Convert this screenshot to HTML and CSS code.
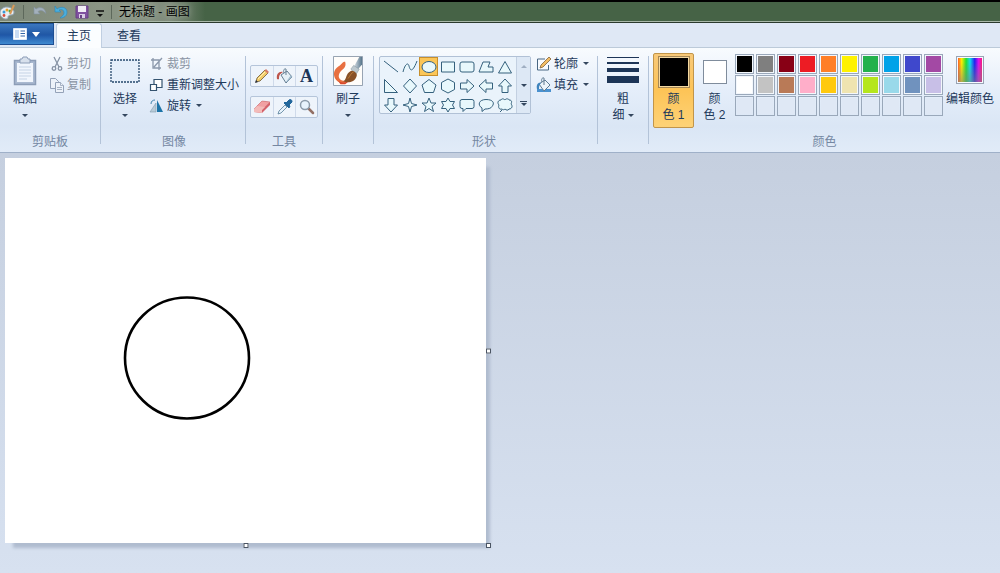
FILE: index.html
```html
<!DOCTYPE html>
<html lang="zh-CN">
<head>
    <meta charset="UTF-8">
    <meta name="viewport" content="width=device-width, initial-scale=1.0">
    <title>无标题 - 画图</title>
    <link rel="stylesheet" href="styles.css">
</head>
<body>
    <header class="title-bar">
        <svg class="app-icon" width="16" height="16" viewBox="0 0 16 16"><path d="M7 3C3 3 0 5.500 0 9s3 6 6 6c2 0 2-1 2-2s1-2 3-2 3-1 3-3-3-5-7-5z" fill="#e8eef2" stroke="#8fa3b4"/><circle cx="4" cy="8" r="1.500" fill="#3b9bd8"/><circle cx="7" cy="6" r="1.500" fill="#e8a030"/><circle cx="10" cy="7" r="1.500" fill="#4caa4c"/><circle cx="4" cy="11.500" r="1.400" fill="#d84a3a"/><path d="M14 1l-4 9" stroke="#d79a58" stroke-width="2"/></svg>
        <span class="title-sep"></span>
        <div class="quick-access">
            <button class="quick-btn" aria-label="撤消"><svg width="14" height="14" viewBox="0 0 14 14"><path d="M1 2v7h6L5 6.500c3-2 5-1 8 2C12 3 8 1 3 4z" fill="#a3b0bb" stroke="#8291a0" stroke-width=".6"/></svg></button>
            <button class="quick-btn" aria-label="恢复"><svg width="14" height="14" viewBox="0 0 14 14"><path d="M1 1v6h6L5 5c3-1 5 0 5 3 0 2-2 3-4 5 4 0 7-2 7-6 0-5-6-6-10-3z" fill="#4baedc" stroke="#2e86b8" stroke-width=".6"/></svg></button>
            <button class="quick-btn" aria-label="保存"><svg width="14" height="14" viewBox="0 0 14 14"><path d="M1 1h12v12H1z" fill="#8051a0" stroke="#684087"/><path d="M3 1h8v6H3z" fill="#f1edf6"/><path d="M4 9h6v4H4z" fill="#d9cde5"/><path d="M5 10h2v3H5z" fill="#684087"/></svg></button>
            <button class="quick-btn quick-more" aria-label="自定义"><svg width="8" height="8" viewBox="0 0 8 8"><path d="M0 1h8" stroke="#111" stroke-width="1.500"/><path d="M1 4h6L4 7z" fill="#111"/></svg></button>
        </div>
        <span class="title-sep"></span>
        <h1 class="title">无标题 - 画图</h1>
    </header>

    <nav class="tabs">
        <button class="file-btn" aria-label="文件">
            <svg width="14" height="12" viewBox="0 0 14 12"><path d="M.5.5h13v11H.5z" fill="#fff" stroke="#dce8f8"/><path d="M2 2h4v8H2z" fill="#c9dcf4"/><path d="M7.500 3H12M7.500 5.500H12M7.500 8H12" stroke="#3265a8"/></svg>
            <svg width="8" height="5" viewBox="0 0 8 5"><path d="M0 0h8L4 5z" fill="#fff"/></svg>
        </button>
        <button class="tab active">主页</button>
        <button class="tab">查看</button>
    </nav>

    <main>
        <section class="ribbon">
            <!-- Clipboard -->
            <div class="group">
                <div class="group-body">
                    <button class="big-btn">
                        <svg width="24" height="30" viewBox="0 0 24 30"><path d="M1.500 4.500h21v24h-21z" fill="#a9b9d0" stroke="#8c9db7" stroke-width="1.500"/><path d="M4 7h16v19H4z" fill="#f1f6fd"/><path d="M6 11h12M6 14h12M6 17h12M6 20h12M6 23h8" stroke="#c5d3e5"/><path d="M7 3h2l1-2h4l1 2h2v4H7z" fill="#d7e0ec" stroke="#8c9db7"/></svg>
                        <span>粘贴</span>
                        <i class="arrow"></i>
                    </button>
                    <div class="stack">
                        <button class="small-btn" disabled><svg width="16" height="16" viewBox="0 0 16 16" fill="none" stroke="#8793a5" stroke-width="1.300"><path d="M5 1l5 10M11 1L6 11"/><circle cx="5" cy="12.500" r="1.800"/><circle cx="11" cy="12.500" r="1.800"/></svg><span>剪切</span></button>
                        <button class="small-btn" disabled><svg width="16" height="16" viewBox="0 0 16 16" fill="#edf2f9" stroke="#94a2b8"><path d="M1.500 1.500h5l3 3v7h-8z"/><path d="M6.500 5.500h5l3 3v7h-8z"/><path d="M11.500 5.500v3h3M8 10.500h5M8 12.500h5" stroke-width=".8"/></svg><span>复制</span></button>
                    </div>
                </div>
                <div class="group-label">剪贴板</div>
            </div>

            <!-- Image -->
            <div class="group image">
                <div class="group-body">
                    <button class="big-btn">
                        <svg width="30" height="30" viewBox="0 0 30 30"><path d="M1 4h28v22H1z" fill="#e4eefa" stroke="#25486c" stroke-width="1.300" stroke-dasharray="2 1"/></svg>
                        <span>选择</span>
                        <i class="arrow"></i>
                    </button>
                    <div class="stack">
                        <button class="small-btn" disabled><svg width="16" height="16" viewBox="0 0 16 16" fill="none" stroke="#8b98ab" stroke-width="1.300"><path d="M4 2v10h8M2 4h8v10M5 11l8-9"/></svg><span>裁剪</span></button>
                        <button class="small-btn"><svg width="16" height="16" viewBox="0 0 16 16" fill="#fff" stroke="#34536f" stroke-width="1.200"><path d="M5 2.500h8v8H5z"/><path d="M1.500 7.500h6v6h-6z"/></svg><span>重新调整大小</span></button>
                        <button class="small-btn"><svg width="16" height="16" viewBox="0 0 16 16"><path d="M7 5v9H1z" fill="#b8cbd8" stroke="#829aab" stroke-width=".6"/><path d="M8 2l6 12H8z" fill="#1c74a8"/><path d="M2 6c0-3 2-4 4-4" fill="none" stroke="#3e82ad"/></svg><span>旋转</span><i class="arrow"></i></button>
                    </div>
                </div>
                <div class="group-label">图像</div>
            </div>

            <!-- Tools -->
            <div class="group tools">
                <div class="group-body">
                    <div class="tool-rows">
                        <div class="tool-row">
                            <button class="tool" aria-label="铅笔"><svg width="16" height="16" viewBox="0 0 16 16"><path d="M2 14l1-4 8-8 3 3-8 8z" fill="#f3cd69" stroke="#6b5632" stroke-width=".8"/><path d="M1 15l1-3 2 2z" fill="#29303b"/><path d="M10.500 2.500L12 1l3 3-1.500 1.500z" fill="#d67a68"/><path d="M4 11l7-7" stroke="#fff0b5"/></svg></button>
                            <button class="tool" aria-label="用颜色填充"><svg width="18" height="16" viewBox="0 0 18 16"><path d="M5 7l6-4 5 6-6 6z" fill="#e6f0f7" stroke="#657e92"/><path d="M10 7V1c-2-1-3 2-2 4" fill="none" stroke="#657e92"/><path d="M1 11c-1-5 2-8 6-7-3 2-4 3-4 7-1 1-2 0-2 0z" fill="#bd554b"/><path d="M11 14l5-5-1-2-5 7z" fill="#9fbacd"/></svg></button>
                            <button class="tool text-tool" aria-label="文本">A</button>
                        </div>
                        <div class="tool-row">
                            <button class="tool" aria-label="橡皮擦"><svg width="16" height="16" viewBox="0 0 16 16"><path d="M0 10l8-8 8 1v3l-8 8-8-1z" fill="#d4616a"/><path d="M0 10l8-8 8 1-8 8z" fill="#f1a0a2" stroke="#cd7579" stroke-width=".6"/><path d="M0 10l3-3 8 1-3 3v3l-8-1z" fill="#f3bbb9"/></svg></button>
                            <button class="tool" aria-label="颜色选取器"><svg width="16" height="16" viewBox="0 0 16 16"><path d="M1 15l1-3 6-6 2 2-6 6z" fill="#e7f2fb" stroke="#557d99" stroke-width=".8"/><path d="M7 4l5 5 1-2-1-1 3-3c0-2-1-3-3-2L9 4 8 3z" fill="#21669b" stroke="#21669b"/></svg></button>
                            <button class="tool" aria-label="放大镜"><svg width="16" height="16" viewBox="0 0 16 16"><path d="M9.500 9.500L14 14" stroke="#937065" stroke-width="2.500" stroke-linecap="round"/><circle cx="6" cy="6" r="4.500" fill="#e7f3fc" stroke="#8b9ba9" stroke-width="1.500"/></svg></button>
                        </div>
                    </div>
                </div>
                <div class="group-label">工具</div>
            </div>

            <!-- Brushes -->
            <div class="group">
                <div class="group-body">
                    <button class="big-btn">
                        <svg width="30" height="30" viewBox="0 0 32 32"><defs><linearGradient id="handle" x1="0" x2="1"><stop stop-color="#dce2e7"/><stop offset="1" stop-color="#56758b"/></linearGradient></defs><path d="M.5.5h31v31H.5z" fill="#fffdfa" stroke="#8e9bab"/><path d="M13 6c-3 0-3 2-7 5-6 4-6 10-3 14 3 4 9 5 15 1-9 2-14-2-11-8 2-4 8-5 6-12z" fill="#e86f3f"/><path d="M2 22c3 6 8 8 16 4l-5 4H8z" fill="#d8492b"/><path d="M22 12l6-11h3v8l-6 7z" fill="url(#handle)"/><path d="M19 14l3-4 6 4-3 5z" fill="#bdc8ce" stroke="#788b96" stroke-width=".5"/><path d="M11 27c4-2 2-8 8-11 3-1 8 3 6 6-2 6-9 7-14 5z" fill="#895127"/><path d="M16 24c2-2 3-6 6-7" stroke="#bc7b38" fill="none"/></svg>
                        <span>刷子</span>
                        <i class="arrow"></i>
                    </button>
                </div>
                <div class="group-label"></div>
            </div>

            <!-- Shapes -->
            <div class="group shapes">
                <div class="group-body">
                    <div class="shape-box">
                        <div class="shape-grid">
                            <button class="shape" aria-label="直线"><svg viewBox="0 0 16 16"><path d="M1 2l14 11"/></svg></button>
                            <button class="shape" aria-label="曲线"><svg viewBox="0 0 16 16"><path d="M1 13C3 5 6 3 7 7s3 8 8-5"/></svg></button>
                            <button class="shape selected" aria-label="椭圆形"><svg viewBox="0 0 16 16"><ellipse cx="8" cy="8" rx="7" ry="5.500"/></svg></button>
                            <button class="shape" aria-label="矩形"><svg viewBox="0 0 16 16"><path d="M1.500 3h13v10h-13z"/></svg></button>
                            <button class="shape" aria-label="圆角矩形"><svg viewBox="0 0 16 16"><rect x="1" y="3" width="14" height="10" rx="2"/></svg></button>
                            <button class="shape" aria-label="多边形"><svg viewBox="0 0 16 16"><path d="M5 3h7l-2 5h5v5H1z"/></svg></button>
                            <button class="shape" aria-label="三角形"><svg viewBox="0 0 16 16"><path d="M8 2.500L14.500 14h-13z"/></svg></button>
                            <button class="shape" aria-label="直角三角形"><svg viewBox="0 0 16 16"><path d="M1.500 1.500v13h13z"/></svg></button>
                            <button class="shape" aria-label="菱形"><svg viewBox="0 0 16 16"><path d="M8 1l6.500 7L8 15 1.500 8z"/></svg></button>
                            <button class="shape" aria-label="五边形"><svg viewBox="0 0 16 16"><path d="M8 1.500l7 5.500-2.500 7.500h-9L1 7z"/></svg></button>
                            <button class="shape" aria-label="六边形"><svg viewBox="0 0 16 16"><path d="M8 1l6.500 3.500v7L8 15l-6.500-3.500v-7z"/></svg></button>
                            <button class="shape" aria-label="右箭头"><svg viewBox="0 0 16 16"><path d="M1.500 5H8V1.500L15 8l-7 6.500V11H1.500z"/></svg></button>
                            <button class="shape" aria-label="左箭头"><svg viewBox="0 0 16 16"><path d="M14.500 5H8V1.500L1 8l7 6.500V11h6.500z"/></svg></button>
                            <button class="shape" aria-label="上箭头"><svg viewBox="0 0 16 16"><path d="M5 14.500V8H1.500L8 1l6.500 7H11v6.500z"/></svg></button>
                            <button class="shape" aria-label="下箭头"><svg viewBox="0 0 16 16"><path d="M5 1.500V8H1.500L8 15l6.500-7H11V1.500z"/></svg></button>
                            <button class="shape" aria-label="四角星"><svg viewBox="0 0 16 16"><path d="M8 1l1.500 5.500L15 8 9.500 9.500 8 15 6.500 9.500 1 8l5.500-1.500z"/></svg></button>
                            <button class="shape" aria-label="五角星"><svg viewBox="0 0 16 16"><path d="M8 1l2 5h5l-4 3.500 1.500 5L8 11.500l-4.500 3L5 9.500 1 6h5z"/></svg></button>
                            <button class="shape" aria-label="六角星"><svg viewBox="0 0 16 16"><path d="M8 1l2 3.500h4.500L12.500 8l2 3.500H10L8 15l-2-3.500H1.500L3.500 8l-2-3.500H6z"/></svg></button>
                            <button class="shape" aria-label="圆角矩形标注"><svg viewBox="0 0 16 16"><path d="M3 2.500h10q2 0 2 2v5q0 2-2 2H7l-3 3v-3H3q-2 0-2-2v-5q0-2 2-2z"/></svg></button>
                            <button class="shape" aria-label="椭圆形标注"><svg viewBox="0 0 16 16"><path d="M4 11C-1 8 1 2.500 8 2.500S17 6 14 9.500c-1 2-4 2.500-7 2.500l-3 2.500z"/></svg></button>
                            <button class="shape" aria-label="云形标注"><svg viewBox="0 0 16 16"><path d="M4 3c1-2 3-1 4 0 1-2 4-1 4 0 3 0 3 2 2 4 2 2 1 5-2 5-1 2-3 1-4 0-1 1-2 1-3 0-3 1-4-2-3-4C0 6 1 3 4 3zM5 13l-2 2"/></svg></button>
                        </div>
                        <div class="shape-scroll">
                            <button class="scroll-btn" aria-label="向上" disabled><i class="arrow up"></i></button>
                            <button class="scroll-btn" aria-label="向下"><i class="arrow"></i></button>
                            <button class="scroll-btn more" aria-label="更多"><i class="arrow"></i></button>
                        </div>
                    </div>
                    <div class="stack">
                        <button class="small-btn"><svg width="16" height="16" viewBox="0 0 16 16"><path d="M9 3H1.500v11h11V9" fill="#f8fbff" stroke="#496783"/><path d="M4 12l1-3 8-8 2 2-8 8z" fill="#f3bd65" stroke="#826238" stroke-width=".8"/></svg><span>轮廓</span><i class="arrow"></i></button>
                        <button class="small-btn"><svg width="16" height="16" viewBox="0 0 16 16"><path d="M1 12h14v3H1z" fill="#4a91cf"/><path d="M3 7l6-4 5 5-6 6z" fill="#edf4f9" stroke="#607b91"/><path d="M8 8V1C6 0 5 3 6 5" fill="none" stroke="#607b91"/><path d="M1 12c-1-4 1-7 4-6-2 2-2 4-2 6z" fill="#3e83bd"/></svg><span>填充</span><i class="arrow"></i></button>
                    </div>
                </div>
                <div class="group-label">形状</div>
            </div>

            <!-- Line width -->
            <div class="group">
                <div class="group-body">
                    <button class="big-btn">
                        <svg width="32" height="30" viewBox="0 0 32 30" fill="#1d3557"><path d="M0 1h32v1H0zM0 6h32v2H0zM0 12h32v4H0zM0 20h32v7H0z"/></svg>
                        <span>粗<br>细<i class="arrow"></i></span>
                    </button>
                </div>
                <div class="group-label"></div>
            </div>

            <!-- Colors -->
            <div class="group colors">
                <div class="group-body">
                    <button class="color-btn selected">
                        <b class="swatch large"></b>
                        <span>颜<br>色 1</span>
                    </button>
                    <button class="color-btn">
                        <b class="swatch"></b>
                        <span>颜<br>色 2</span>
                    </button>
                    <div class="palette">
                        <button class="cell black" aria-label="黑色"></button>
                        <button class="cell gray" aria-label="灰色"></button>
                        <button class="cell dark-red" aria-label="深红色"></button>
                        <button class="cell red" aria-label="红色"></button>
                        <button class="cell orange" aria-label="橙色"></button>
                        <button class="cell yellow" aria-label="黄色"></button>
                        <button class="cell green" aria-label="绿色"></button>
                        <button class="cell turquoise" aria-label="青绿"></button>
                        <button class="cell indigo" aria-label="靛蓝"></button>
                        <button class="cell purple" aria-label="紫色"></button>
                        <button class="cell white" aria-label="白色"></button>
                        <button class="cell light-gray" aria-label="浅灰色"></button>
                        <button class="cell brown" aria-label="褐色"></button>
                        <button class="cell rose" aria-label="玫瑰色"></button>
                        <button class="cell gold" aria-label="金色"></button>
                        <button class="cell cream" aria-label="浅黄色"></button>
                        <button class="cell lime" aria-label="酸橙色"></button>
                        <button class="cell sky" aria-label="淡青绿色"></button>
                        <button class="cell blue-gray" aria-label="蓝灰色"></button>
                        <button class="cell lavender" aria-label="淡紫色"></button>
                        <button class="cell" disabled></button>
                        <button class="cell" disabled></button>
                        <button class="cell" disabled></button>
                        <button class="cell" disabled></button>
                        <button class="cell" disabled></button>
                        <button class="cell" disabled></button>
                        <button class="cell" disabled></button>
                        <button class="cell" disabled></button>
                        <button class="cell" disabled></button>
                        <button class="cell" disabled></button>
                    </div>
                    <button class="big-btn edit-colors">
                        <b class="spectrum"></b>
                        <span>编辑颜色</span>
                    </button>
                </div>
                <div class="group-label">颜色</div>
            </div>
        </section>

        <section class="workspace">
            <div class="canvas">
                <svg class="drawing" viewBox="0 0 481 385"><ellipse cx="182" cy="200" rx="62" ry="60.500" fill="none" stroke="#000" stroke-width="2.600"/></svg>
                <i class="handle right"></i>
                <i class="handle bottom"></i>
                <i class="handle corner"></i>
            </div>
        </section>
    </main>
</body>
</html>
```

FILE: styles.css
```css
* {
    box-sizing: border-box;
}
body {
    margin: 0;
    min-height: 100vh;
    display: flex;
    flex-direction: column;
    font-family: "Liberation Sans", "Noto Sans CJK SC", sans-serif;
    font-size: 12px;
    line-height: 16px;
    color: #1e395b;
}
button {
    margin: 0;
    padding: 0;
    border: 0;
    background: none;
    font: inherit;
    color: inherit;
}
svg {
    display: block;
    flex: none;
}
main {
    flex: 1;
    display: flex;
    flex-direction: column;
}

/* title bar */
.title-bar {
    display: flex;
    align-items: center;
    height: 23px;
    border-top: 2px solid #000;
    border-bottom: 1px solid #2b3a2d;
    background: linear-gradient(90deg, #7d8878 0, #8b9585 100px, #7f8b7b 170px, #466346 205px, #466346 100%);
    box-shadow: inset 0 -1px #a9b8a9;
}
.title-sep {
    width: 1px;
    height: 14px;
    margin: 0 7px;
    background: #5d685b;
}
.quick-access {
    display: flex;
    align-items: center;
    gap: 7px;
    padding-left: 2px;
}
.quick-more {
    padding: 3px 0 0;
}
.title {
    margin: 0;
    font-size: 12px;
    font-weight: normal;
    color: #000;
    text-shadow: 0 0 6px #b9c2b5;
}

/* tabs */
.tabs {
    display: flex;
    height: 25px;
    background: #dfe8f5;
    border-bottom: 1px solid #bccad9;
}
.file-btn {
    display: flex;
    align-items: center;
    justify-content: center;
    gap: 5px;
    width: 54px;
    height: 22px;
    border: 1px solid #1d4e93;
    border-left: 0;
    background: linear-gradient(#3b77bf, #2259a6 50%, #1f57a8 55%, #3f8ad0);
}
.tab {
    width: 46px;
    height: 25px;
    margin: 0 2px;
    border: 1px solid transparent;
}
.tab.active {
    border-color: #c0cfe2;
    border-bottom: 0;
    border-radius: 3px 3px 0 0;
    background: #fbfdff;
}

/* ribbon */
.ribbon {
    display: flex;
    height: 105px;
    background: linear-gradient(#f8fbfe, #e5eefa 40%, #dae6f5 75%, #e1ebf8);
    border-bottom: 1px solid #9fb0c8;
}
.group {
    position: relative;
    display: flex;
    flex-direction: column;
    padding: 5px 10px 0 9px;
}
.group::after {
    content: "";
    position: absolute;
    top: 8px;
    right: 0;
    bottom: 8px;
    width: 1px;
    background: #b3c3d8;
}
.group-body {
    display: flex;
    gap: 8px;
    height: 81px;
}
.group-label {
    text-align: center;
    color: #7487a2;
}
.big-btn {
    display: flex;
    flex-direction: column;
    align-items: center;
    gap: 5px;
    min-width: 32px;
    padding-top: 3px;
    white-space: nowrap;
}
.stack {
    display: flex;
    flex-direction: column;
}
.small-btn {
    display: flex;
    align-items: center;
    gap: 2px;
    height: 21px;
    white-space: nowrap;
}
.small-btn:disabled {
    color: #8a94a3;
}
.arrow {
    display: inline-block;
    border: 3px solid transparent;
    border-top-color: #34475f;
    border-bottom: 0;
}
.big-btn > .arrow {
    margin-top: 2px;
}
.big-btn span .arrow,
.small-btn .arrow {
    margin-left: 3px;
    vertical-align: middle;
}
.arrow.up {
    border-top: 0;
    border-bottom: 3px solid #9faec2;
}

/* image */
.image {
    padding: 5px 7px 0 8px;
}

/* tools */
.tools {
    padding: 5px 5px 0 4px;
}
.tool-rows {
    display: flex;
    flex-direction: column;
    gap: 9px;
    padding-top: 12px;
}
.tool-row {
    display: flex;
    border: 1px solid #b5c5da;
    border-radius: 2px;
    background: #eef4fb;
}
.tool {
    display: flex;
    align-items: center;
    justify-content: center;
    width: 22px;
    height: 20px;
}
.tool + .tool {
    border-left: 1px solid #cfdaea;
}
.text-tool {
    font: bold 18px "Liberation Serif", serif;
    color: #1b3658;
}

/* shapes */
.shapes {
    padding: 5px 9px 0 5px;
}
.shapes .group-body {
    gap: 5px;
}
.shape-box {
    display: flex;
    height: 58px;
    margin-top: 3px;
    border: 1px solid #b1c1d6;
    border-radius: 2px;
    background: #eaf3fb;
}
.shape-grid {
    display: grid;
    grid-template-columns: repeat(7, 19px);
    grid-auto-rows: 19px;
    padding: 0 2px 0 1px;
}
.shape {
    display: flex;
    align-items: center;
    justify-content: center;
}
.shape svg {
    width: 16px;
    height: 16px;
    fill: #e8f8fc;
    stroke: #35617d;
}
.shape.selected {
    border: 1px solid #c78f2c;
    background: #fbc658;
}
.shape-scroll {
    display: flex;
    flex-direction: column;
    width: 14px;
    border-left: 1px solid #c3d0e1;
    background: #dde8f5;
}
.scroll-btn {
    flex: 1;
    display: flex;
    flex-direction: column;
    align-items: center;
    justify-content: center;
    gap: 1px;
}
.scroll-btn.more::before {
    content: "";
    width: 7px;
    height: 1px;
    background: #34475f;
}

/* colors */
.colors {
    flex: 1;
    padding: 5px 4px 0;
}
.colors::after {
    display: none;
}
.colors .group-body {
    gap: 0;
}
.color-btn {
    display: flex;
    flex-direction: column;
    align-items: center;
    gap: 3px;
    width: 41px;
    height: 75px;
    padding-top: 2px;
    border: 1px solid transparent;
    border-radius: 2px;
}
.color-btn.selected {
    border-color: #c1954a;
    background: linear-gradient(#f8c979, #fdc457 50%, #fdd277);
}
.swatch {
    width: 24px;
    height: 24px;
    margin: 4px;
    border: 1px solid #7f8c9c;
    background: #fff;
}
.swatch.large {
    width: 32px;
    height: 32px;
    margin: 0;
    border-color: #a58755;
    background: #000;
    box-shadow: inset 0 0 0 1px #f5d9a0;
}
.palette {
    display: grid;
    grid-template-columns: repeat(10, 19px);
    grid-auto-rows: 20px;
    gap: 1px 2px;
    padding: 1px 3px 0 0;
}
.cell {
    padding: 1px;
    border: 1px solid #9aa8ba;
    background-clip: content-box;
    background-color: #dfe8f5;
    box-shadow: inset 0 0 0 1px #f3f7fc;
}
.cell:disabled {
    box-shadow: none;
}
.black { background-color: #000; }
.gray { background-color: #7f7f7f; }
.dark-red { background-color: #880015; }
.red { background-color: #ed1c24; }
.orange { background-color: #ff7f27; }
.yellow { background-color: #fff200; }
.green { background-color: #22b14c; }
.turquoise { background-color: #00a2e8; }
.indigo { background-color: #3f48cc; }
.purple { background-color: #a349a4; }
.white { background-color: #fff; }
.light-gray { background-color: #c3c3c3; }
.brown { background-color: #b97a57; }
.rose { background-color: #ffaec9; }
.gold { background-color: #ffc90e; }
.cream { background-color: #efe4b0; }
.lime { background-color: #b5e61d; }
.sky { background-color: #99d9ea; }
.blue-gray { background-color: #7092be; }
.lavender { background-color: #c8bfe7; }
.spectrum {
    width: 28px;
    height: 28px;
    margin-bottom: 2px;
    border: 1px solid #98a5b5;
    outline: 1px solid #f7faff;
    outline-offset: -2px;
    background: linear-gradient(transparent 20%, #80808099), linear-gradient(90deg, #f33, #fe0 18%, #2d3 35%, #1de 50%, #22e 68%, #d1e 83%, #f25);
}

/* workspace */
.workspace {
    flex: 1;
    padding: 5px;
    background: linear-gradient(#c5cfdf, #d7e1f0);
}
.canvas {
    position: relative;
    width: 481px;
    background: #fff;
    box-shadow: 6px 7px 3px -2px #b0bccf;
}
.handle {
    position: absolute;
    width: 5px;
    height: 5px;
    border: 1px solid #4b5563;
    background: #fff;
}
.handle.right {
    top: 50%;
    right: -5px;
    transform: translateY(-50%);
}
.handle.bottom {
    left: 50%;
    bottom: -5px;
    transform: translateX(-50%);
}
.handle.corner {
    right: -5px;
    bottom: -5px;
}
```
